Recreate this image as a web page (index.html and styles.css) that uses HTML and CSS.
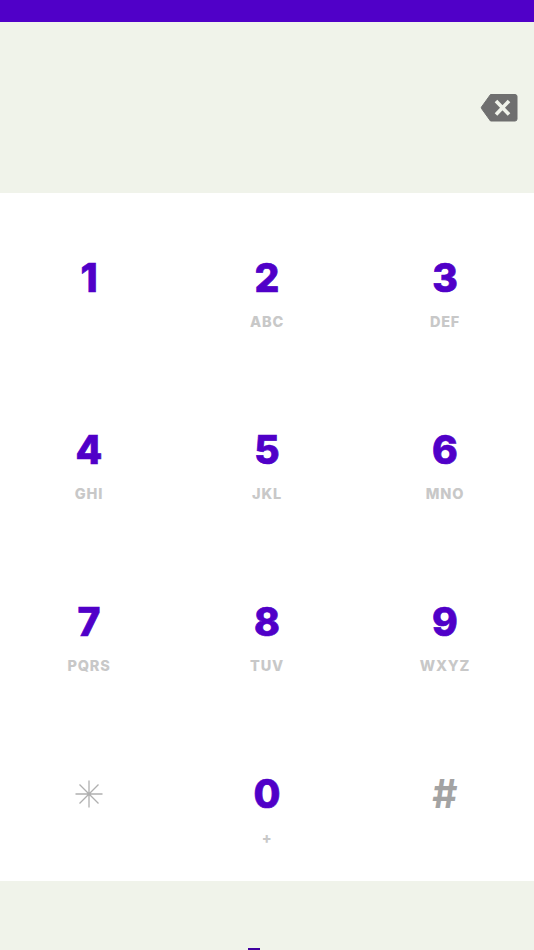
FILE: index.html
```html
<!DOCTYPE html>
<html lang="en">
<head>
<meta charset="utf-8">
<title>Dialer</title>
<link rel="stylesheet" href="styles.css">
</head>
<body>
<div class="status"></div>
<div class="display">
  <svg class="backspace" width="38" height="30" viewBox="0 0 38 30" aria-label="Delete">
    <path d="M10.500 1.500H35Q37 1.500 37 3.500V26Q37 28 35 28H10.500L1.500 15.500Q1 14.800 1.500 14Z" fill="#6f6f6f" stroke="#6f6f6f" stroke-width="1" stroke-linejoin="round"/>
    <path d="M16 8L29 21.500M29 8L16 21.500" stroke="#f0f3ea" stroke-width="3.600" fill="none"/>
  </svg>
</div>
<main class="pad">
  <div class="key"><span class="digit">1</span><span class="sub"></span></div>
  <div class="key"><span class="digit">2</span><span class="sub">ABC</span></div>
  <div class="key"><span class="digit">3</span><span class="sub">DEF</span></div>
  <div class="key"><span class="digit">4</span><span class="sub">GHI</span></div>
  <div class="key"><span class="digit">5</span><span class="sub">JKL</span></div>
  <div class="key"><span class="digit">6</span><span class="sub">MNO</span></div>
  <div class="key"><span class="digit">7</span><span class="sub">PQRS</span></div>
  <div class="key"><span class="digit">8</span><span class="sub">TUV</span></div>
  <div class="key"><span class="digit">9</span><span class="sub">WXYZ</span></div>
  <div class="key">
    <span class="digit symbol">
      <svg width="28" height="28" viewBox="0 0 28 28" aria-label="Star">
        <path d="M14 0.500V27.500M0.500 14H27.500M4.500 4.500L23.500 23.500M23.500 4.500L4.500 23.500" stroke="#b0b0b0" stroke-width="1.300" fill="none"/>
      </svg>
    </span>
    <span class="sub"></span>
  </div>
  <div class="key"><span class="digit">0</span><span class="sub">+</span></div>
  <div class="key"><span class="digit hash">#</span><span class="sub"></span></div>
</main>
<footer class="foot"><span class="peek"></span></footer>
</body>
</html>
```

FILE: styles.css
```css
html, body {
  margin: 0;
  padding: 0;
  height: 950px;
  overflow: hidden;
  background: #f0f3ea;
  font-family: Inter, "Liberation Sans", sans-serif;
}
.status {
  height: 22px;
  background: #5000c8;
}
.display {
  height: 171px;
  background: #f0f3ea;
  display: flex;
  align-items: center;
  justify-content: flex-end;
  padding-right: 16px;
}
.backspace {
  display: block;
}
.pad {
  height: 688px;
  background: #fff;
  display: grid;
  grid-template-columns: repeat(3, 178px);
  grid-template-rows: repeat(4, 172px);
}
.key {
  display: flex;
  flex-direction: column;
  align-items: center;
  padding-top: 61px;
}
.digit {
  height: 48px;
  line-height: 48px;
  font-size: 39px;
  font-weight: 800;
  -webkit-text-stroke: 0.7px #5000c8;
  color: #5000c8;
  display: flex;
  align-items: center;
}
.hash {
  color: #a3a3a3;
  font-weight: 700;
  -webkit-text-stroke: 0;
}
.sub {
  margin-top: 10px;
  height: 20px;
  line-height: 20px;
  font-size: 14.500px;
  font-weight: 800;
  letter-spacing: 0.8px;
  color: #c8c8c8;
}
.foot {
  height: 69px;
  display: flex;
  justify-content: center;
  align-items: flex-end;
}
.peek {
  width: 12px;
  height: 2px;
  background: #3f00a0;
  margin-left: -26px;
}
```
